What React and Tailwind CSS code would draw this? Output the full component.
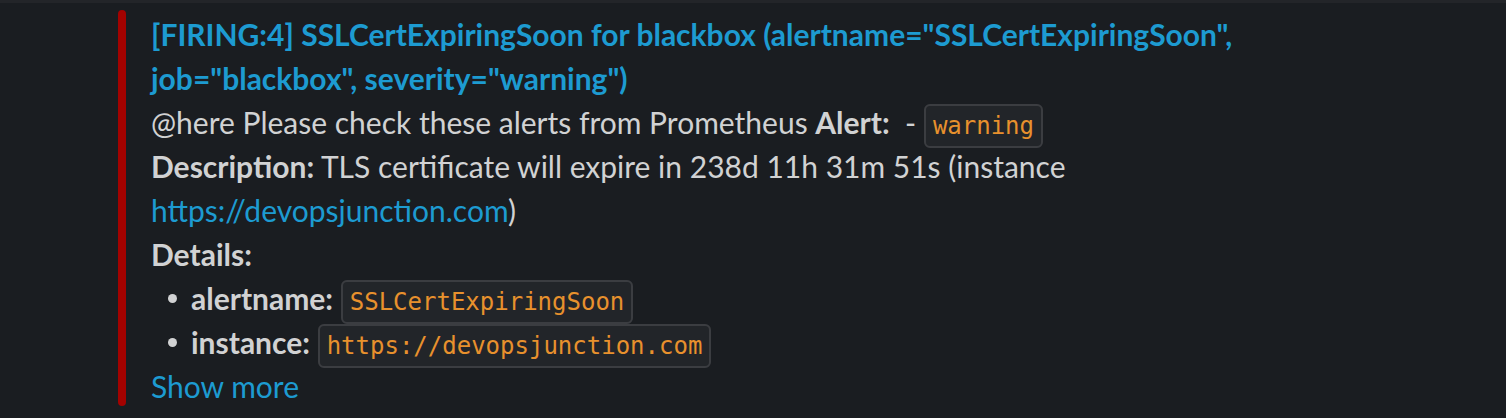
import React from "react";

function Code({ children }) {
  return (
    <code className="font-['DejaVu_Sans_Mono',monospace] text-[24px] leading-none text-[#e8912d] bg-[#222529] border-2 border-[#3b3d41] rounded-[6px] px-[7px] py-[6px]">
      {children}
    </code>
  );
}

function Bullet({ label, value }) {
  return (
    <div className="flex items-center pl-[17px] h-[44px]">
      <span className="w-[9px] h-[9px] rounded-full bg-[#d1d2d3] mr-[14px] shrink-0" />
      <span>
        <b className="font-bold">{label}</b> <Code>{value}</Code>
      </span>
    </div>
  );
}

export default function App() {
  return (
    <div className="w-[1506px] h-[418px] bg-[#1a1d21] overflow-hidden font-['Lato',sans-serif] text-[30px] leading-[44px] text-[#d1d2d3]">
      <div className="h-[3px] bg-[#232529]" />
      <div className="flex pl-[118px] pt-[7px]">
        <div className="w-[8px] h-[396px] rounded-full bg-[#a30200] shrink-0" />
        <div className="pl-[25px] pt-[2px] w-[1300px] whitespace-nowrap">
          <div className="font-bold text-[#1d9bd1]">
            [FIRING:4] SSLCertExpiringSoon for blackbox (alertname="SSLCertExpiringSoon",
            <br />
            job="blackbox", severity="warning")
          </div>
          <div>
            @here Please check these alerts from Prometheus <b className="font-bold">Alert:</b>
            {"\u00a0"} - <Code>warning</Code>
          </div>
          <div>
            <b className="font-bold">Description:</b> TLS certificate will expire in 238d 11h 31m 51s (instance
            <br />
            <span className="text-[#1d9bd1]">https://devopsjunction.com</span>)
          </div>
          <div>
            <b className="font-bold">Details:</b>
          </div>
          <Bullet label="alertname:" value="SSLCertExpiringSoon" />
          <Bullet label="instance:" value="https://devopsjunction.com" />
          <div className="text-[#1d9bd1]">Show more</div>
        </div>
      </div>
    </div>
  );
}
